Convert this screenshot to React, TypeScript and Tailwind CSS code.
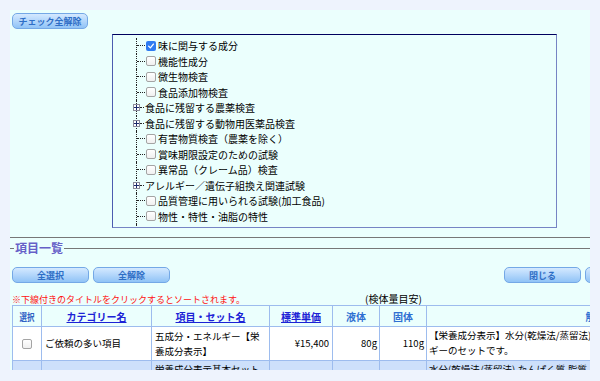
import React from "react"

const font = { fontFamily: '"Noto Sans CJK JP", "Noto Sans", sans-serif' }

type Kind = "check" | "checked" | "folder"

const tree: { label: string; kind: Kind }[] = [
    { label: "味に関与する成分", kind: "checked" },
    { label: "機能性成分", kind: "check" },
    { label: "微生物検査", kind: "check" },
    { label: "食品添加物検査", kind: "check" },
    { label: "食品に残留する農薬検査", kind: "folder" },
    { label: "食品に残留する動物用医薬品検査", kind: "folder" },
    { label: "有害物質検査（農薬を除く）", kind: "check" },
    { label: "賞味期限設定のための試験", kind: "check" },
    { label: "異常品（クレーム品）検査", kind: "check" },
    { label: "アレルギー／遺伝子組換え関連試験", kind: "folder" },
    { label: "品質管理に用いられる試験(加工食品)", kind: "check" },
    { label: "物性・特性・油脂の特性", kind: "check" },
    { label: "その他", kind: "check" },
]

function Checkbox({ checked = false, size = "h-[10px] w-[10px]" }: { checked?: boolean; size?: string }) {
    if (checked) {
        return (
            <span className={`flex ${size} shrink-0 items-center justify-center rounded-[2px] bg-[#2f7bf2]`}>
                <svg viewBox="0 0 10 10" className="h-[8px] w-[8px]">
                    <path d="M2 5.2 L4.2 7.4 L8 2.6" fill="none" stroke="white" strokeWidth="1.6" strokeLinecap="round" strokeLinejoin="round" />
                </svg>
            </span>
        )
    }
    return <span className={`block ${size} shrink-0 rounded-[2px] border border-[#a4a4a4] bg-linear-to-b from-white to-[#f0f0f0]`} />
}

function TreeRow({ label, kind }: { label: string; kind: Kind }) {
    return (
        <div className="flex h-[15.5px] items-center border-l border-dotted border-[#222]">
            {kind === "folder" ? (
                <>
                    <span className="-ml-[4px] flex h-[7px] w-[7px] shrink-0 items-center justify-center border border-[#8c8c9c] bg-white">
                        <svg viewBox="0 0 5 5" className="h-[5px] w-[5px]">
                            <path d="M0 2.5 H5 M2.5 0 V5" stroke="#1c2a6c" strokeWidth="1" />
                        </svg>
                    </span>
                    <span className="w-[4px] border-t border-dotted border-[#222]" />
                    <span className="ml-[1px] whitespace-nowrap text-[10px] text-black">{label}</span>
                </>
            ) : (
                <>
                    <span className="w-[8px] border-t border-dotted border-[#222]" />
                    <span className="ml-[1px]">
                        <Checkbox checked={kind === "checked"} />
                    </span>
                    <span className="ml-[2px] whitespace-nowrap text-[10px] text-black">{label}</span>
                </>
            )}
        </div>
    )
}

function Btn({ children }: { children: React.ReactNode }) {
    return (
        <button className="flex h-[16px] w-[77px] shrink-0 items-center justify-center rounded-[5px] border border-[#74a8e6] bg-linear-to-b from-[#d4e9ff] to-[#90c3f6] text-[9px] leading-none font-bold text-[#2e6ec6]">
            {children}
        </button>
    )
}

export default function App() {
    return (
        <div className="h-[381px] w-[600px] overflow-hidden bg-[#eef3fd] pt-[10px] pl-[10px]" style={font}>
            <div className="h-[360px] w-[580px] overflow-hidden bg-[#ebfffd]">
                <div className="w-[760px]">
                    {/* Check reset */}
                    <div className="pt-[3px] pl-[2px]">
                        <button className="flex h-[16px] w-[76px] items-center justify-center rounded-[5px] border border-[#74a8e6] bg-linear-to-b from-[#d4e9ff] to-[#90c3f6] text-[9px] leading-none font-bold text-[#2e6ec6]">
                            チェック全解除
                        </button>
                    </div>

                    {/* Category tree */}
                    <div className="mt-[5px] ml-[102px] h-[194px] w-[445px] overflow-hidden border border-t-[#00005e] border-l-[#4c5cb0] border-r-[#7684c4] border-b-[#7684c4]">
                        <div className="ml-[23px] pt-[3px]">
                            {tree.map((t) => (
                                <TreeRow key={t.label} label={t.label} kind={t.kind} />
                            ))}
                        </div>
                    </div>

                    <div className="mt-[9px] w-[580px] border-t border-[#777]" />

                    {/* Legend */}
                    <div className="mt-[3px] flex h-[14px] w-[580px] items-center">
                        <span className="w-[4px] border-t border-[#777]" />
                        <span className="px-[1px] text-[12px] leading-none font-bold text-[#6660c8]">項目一覧</span>
                        <span className="flex-1 border-t border-[#777]" />
                    </div>

                    {/* Buttons */}
                    <div className="mt-[12px] flex w-[652px] pl-[2px]">
                        <div className="flex gap-[4px]">
                            <Btn>全選択</Btn>
                            <Btn>全解除</Btn>
                        </div>
                        <div className="ml-auto flex gap-[4px]">
                            <Btn>閉じる</Btn>
                            <Btn>印刷する</Btn>
                        </div>
                    </div>

                    <div className="mt-[9px] flex h-[14px] items-center pl-[2px]">
                        <span className="w-[353px] text-[9px] leading-none whitespace-nowrap text-[#ff1010]">
                            ※下線付きのタイトルをクリックするとソートされます。
                        </span>
                        <span className="text-[10px] leading-none text-black">(検体量目安)</span>
                    </div>

                    {/* Table */}
                    <table className="-mt-[1px] ml-[2px] w-[753px] table-fixed border-collapse text-[9.5px] text-black">
                        <colgroup>
                            <col className="w-[29px]" />
                            <col className="w-[110px]" />
                            <col className="w-[118px]" />
                            <col className="w-[63px]" />
                            <col className="w-[47px]" />
                            <col className="w-[47px]" />
                            <col />
                        </colgroup>
                        <thead>
                            <tr className="h-[21px] bg-[#ebfffd] text-[10px] font-bold">
                                <th className="border border-[#9dbcee] p-0 text-[#2f62c4]">
                                    <span className="inline-block scale-x-75 whitespace-nowrap">選択</span>
                                </th>
                                <th className="border border-[#9dbcee] p-0 text-[#1c22d6] underline">カテゴリー名</th>
                                <th className="border border-[#9dbcee] p-0 text-[#1c22d6] underline">項目・セット名</th>
                                <th className="border border-[#9dbcee] p-0 text-[#1c22d6] underline">標準単価</th>
                                <th className="border border-[#9dbcee] p-0 text-[#2f6fd2]">液体</th>
                                <th className="border border-[#9dbcee] p-0 text-[#2f6fd2]">固体</th>
                                <th className="border border-[#9dbcee] p-0 text-[#2f6fd2]">解説</th>
                            </tr>
                        </thead>
                        <tbody className="leading-[15px]">
                            <tr className="h-[34px] bg-white">
                                <td className="border border-[#9dbcee] p-0 text-center">
                                    <span className="inline-flex align-middle">
                                        <Checkbox />
                                    </span>
                                </td>
                                <td className="border border-[#9dbcee] px-[3px] py-0">ご依頼の多い項目</td>
                                <td className="border border-[#9dbcee] px-[3px] py-[1px]">五成分・エネルギー【栄養成分表示】</td>
                                <td className="border border-[#9dbcee] px-[3px] py-0 text-right">¥15,400</td>
                                <td className="border border-[#9dbcee] px-[2px] py-0 text-right">80g</td>
                                <td className="border border-[#9dbcee] px-[2px] py-0 text-right">110g</td>
                                <td className="border border-[#9dbcee] px-[2px] py-[1px] align-top">
                                    【栄養成分表示】水分(乾燥法/蒸留法),たんぱく質,脂質,灰分,炭水化物,エネルギーのセットです。
                                </td>
                            </tr>
                            <tr className="h-[50px] bg-[#cde0fb]">
                                <td className="border border-[#9dbcee] p-0 text-center">
                                    <span className="inline-flex align-middle">
                                        <Checkbox />
                                    </span>
                                </td>
                                <td className="border border-[#9dbcee] px-[3px] py-0">ご依頼の多い項目</td>
                                <td className="border border-[#9dbcee] px-[3px] py-[1px] align-top">栄養成分表示基本セット</td>
                                <td className="border border-[#9dbcee] px-[3px] py-0 text-right">¥12,100</td>
                                <td className="border border-[#9dbcee] px-[2px] py-0 text-right">80g</td>
                                <td className="border border-[#9dbcee] px-[2px] py-0 text-right">110g</td>
                                <td className="border border-[#9dbcee] px-[2px] py-[1px] align-top">
                                    水分(乾燥法/蒸留法),たんぱく質,脂質,灰分,炭水化物,エネルギー,ナトリウムのセットです。
                                </td>
                            </tr>
                        </tbody>
                    </table>
                </div>
            </div>
        </div>
    )
}
